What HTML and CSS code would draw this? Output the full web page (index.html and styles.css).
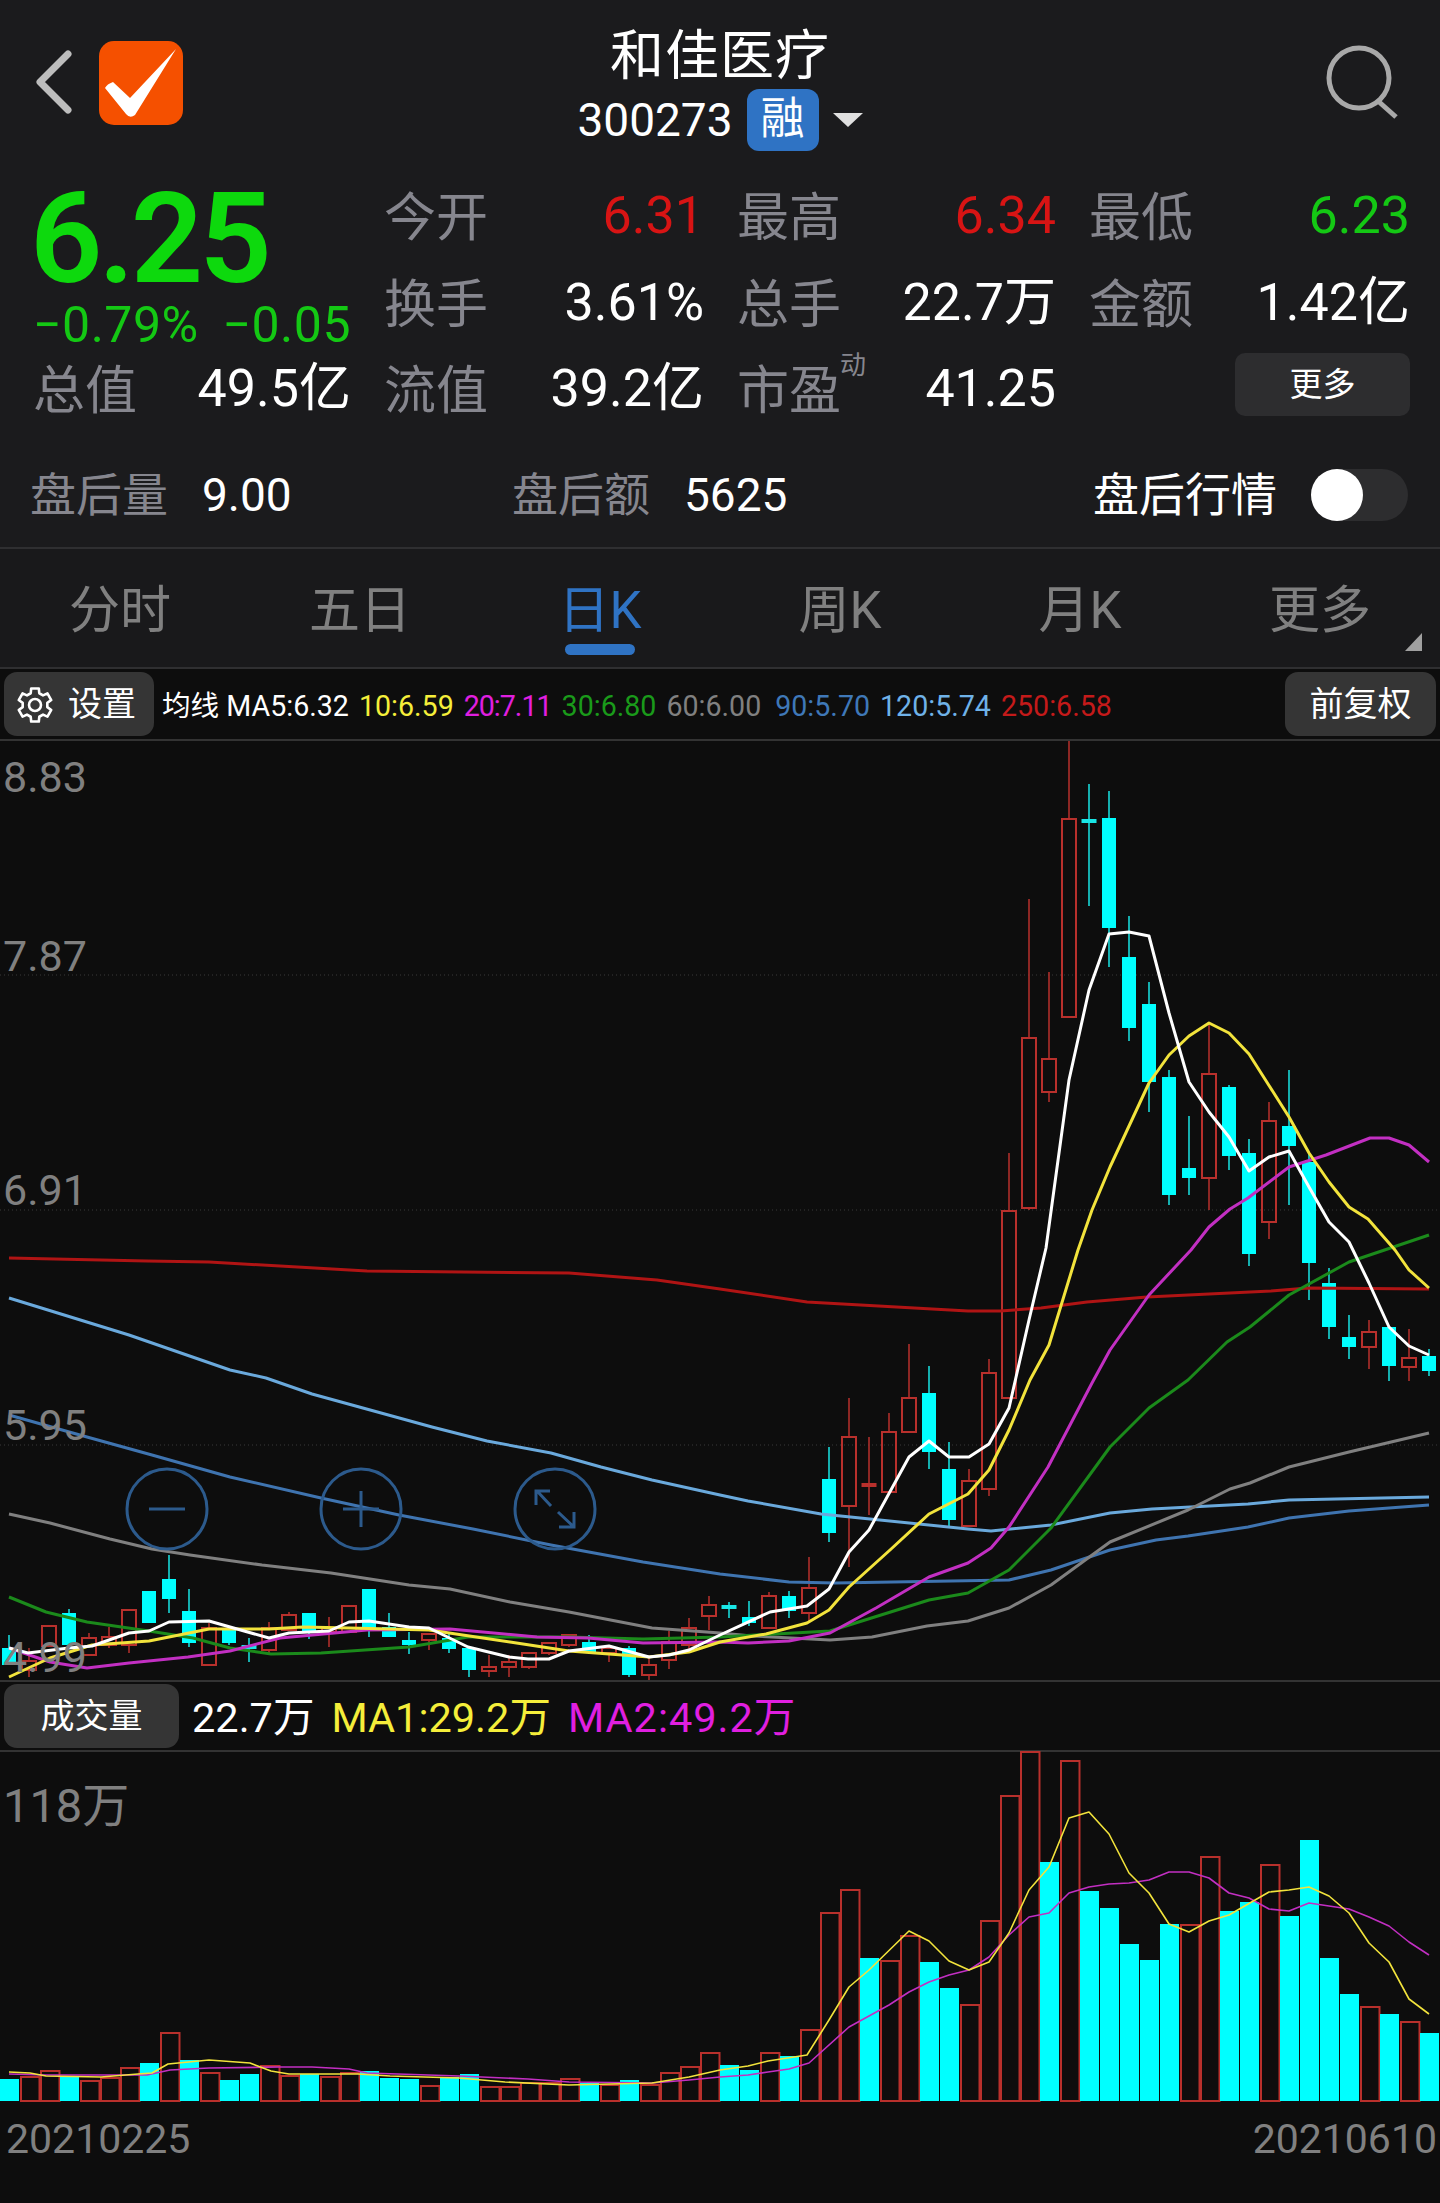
FILE: index.html
```html
<!doctype html>
<html lang="zh-CN">
<head>
  <meta charset="UTF-8" />
  <meta name="viewport" content="width=device-width, initial-scale=1.0" />
  <title>和佳医疗 300273</title>
  <link rel="stylesheet" href="styles.css">
</head>
<body>

  <header class="topbar">
    <div class="topbar_left">
      <svg class="back" viewBox="0 0 40 64"><path d="M36 4 L8 32 L36 60" /></svg>
      <svg class="watch" viewBox="0 0 84 84">
        <rect width="84" height="84" rx="15" />
        <path d="M6 47 Q8 43 14 41 L31 57 L77 8 L36 74 Q31 78 27 73 Z" />
      </svg>
    </div>
    <div class="topbar_mid">
      <div class="stock_name">和佳医疗</div>
      <div class="stock_code">
        <span>300273</span>
        <span class="rong">融</span>
        <i class="caret"></i>
      </div>
    </div>
    <svg class="search" viewBox="0 0 76 76">
      <circle cx="33" cy="33" r="30" />
      <path d="M52 56 L70 72" />
    </svg>
  </header>

  <section class="quote">
    <div class="price_box">
      <div class="price">6.25</div>
      <div class="change"><span>−0.79%</span><span>−0.05</span></div>
    </div>
    <div class="cell"><span class="label">今开</span><span class="red">6.31</span></div>
    <div class="cell"><span class="label">最高</span><span class="red">6.34</span></div>
    <div class="cell"><span class="label">最低</span><span class="green">6.23</span></div>
    <div class="cell"><span class="label">换手</span><span>3.61%</span></div>
    <div class="cell"><span class="label">总手</span><span>22.7万</span></div>
    <div class="cell"><span class="label">金额</span><span>1.42亿</span></div>
    <div class="cell"><span class="label">总值</span><span>49.5亿</span></div>
    <div class="cell"><span class="label">流值</span><span>39.2亿</span></div>
    <div class="cell"><span class="label pe">市盈<sup>动</sup></span><span>41.25</span></div>
    <div class="cell cell_more"><button class="more">更多</button></div>
  </section>

  <section class="after">
    <div class="after_item"><span class="label">盘后量</span><span>9.00</span></div>
    <div class="after_item"><span class="label">盘后额</span><span>5625</span></div>
    <div class="after_switch">
      <span>盘后行情</span>
      <span class="toggle"><i></i></span>
    </div>
  </section>

  <nav class="tabs">
    <a>分时</a>
    <a>五日</a>
    <a class="active">日K</a>
    <a>周K</a>
    <a>月K</a>
    <a class="tab_more">更多</a>
  </nav>

  <main class="board">
    <div class="ma_bar">
      <button class="chip chip_set">
        <svg class="gear" viewBox="0 0 36 36">
          <polygon points="13.72,6.25 14.18,1.44 21.82,1.44 22.28,6.25 26.04,8.41 30.43,6.41 34.25,13.03 30.32,15.83 30.32,20.17 34.25,22.97 30.43,29.59 26.04,27.59 22.28,29.75 21.82,34.56 14.18,34.56 13.72,29.75 9.96,27.59 5.57,29.59 1.75,22.97 5.68,20.17 5.68,15.83 1.75,13.03 5.57,6.41 9.96,8.41" />
          <circle cx="18" cy="18" r="6" />
        </svg>
        <span>设置</span>
      </button>
      <div class="ma_list">
        <span class="c_white">均线 MA5:6.32</span>
        <span class="c_yellow">10:6.59</span>
        <span class="c_magenta">20:7.11</span>
        <span class="c_green">30:6.80</span>
        <span class="c_gray">60:6.00</span>
        <span class="c_blue">90:5.70</span>
        <span class="c_sky">120:5.74</span>
        <span class="c_red">250:6.58</span>
      </div>
      <button class="chip chip_adj">前复权</button>
    </div>

    <svg id="kline" class="kline" viewBox="0 741 1440 939"></svg>

    <div class="vol_bar">
      <button class="chip chip_vol">成交量</button>
      <div class="vol_list">
        <span class="c_white">22.7万</span>
        <span class="c_yellow">MA1:29.2万</span>
        <span class="c_magenta vol_ma2">MA2:49.2万</span>
      </div>
    </div>

    <svg id="volume" class="volume" viewBox="0 1752 1440 353"></svg>

    <div class="dates">
      <span>20210225</span>
      <span>20210610</span>
    </div>
  </main>

  <script src="chart.js"></script>
</body>
</html>
```

FILE: styles.css
```css
* {
  box-sizing: border-box;
}

body {
  margin: 0;
  width: 1440px;
  height: 2203px;
  overflow: hidden;
  background: #1b1b1d;
  color: #fff;
  font-family: Roboto, "Noto Sans CJK SC", sans-serif;
}

button {
  border: 0;
  color: #fff;
  font-family: inherit;
}

/* top bar */
.topbar {
  height: 173px;
  display: grid;
  grid-template-columns: 1fr auto 1fr;
  padding-top: 30px;
}

.topbar_left {
  display: flex;
  align-items: flex-start;
  gap: 27px;
  padding: 11px 0 0 32px;
}

.back {
  width: 40px;
  height: 64px;
  margin-top: 9px;
}

.back path {
  fill: none;
  stroke: #bdbdbd;
  stroke-width: 7;
  stroke-linecap: round;
  stroke-linejoin: round;
}

.watch {
  width: 84px;
  height: 84px;
}

.watch rect {
  fill: #f55000;
}

.watch path {
  fill: #fff;
}

.topbar_mid {
  text-align: center;
}

.stock_name {
  font-size: 54px;
  line-height: 54px;
  letter-spacing: 1px;
}

.stock_code {
  display: flex;
  align-items: center;
  justify-content: center;
  gap: 14px;
  font-size: 46px;
  margin-top: 5px;
}

.rong {
  width: 72px;
  height: 62px;
  border-radius: 12px;
  background: #2f73c4;
  font-size: 44px;
  line-height: 60px;
  text-align: center;
}

.caret {
  width: 0;
  height: 0;
  border-left: 15px solid transparent;
  border-right: 15px solid transparent;
  border-top: 14px solid #e0e0e0;
}

.search {
  width: 76px;
  height: 76px;
  justify-self: end;
  margin: 15px 38px 0 0;
}

.search circle,
.search path {
  fill: none;
  stroke: #a9a9a9;
  stroke-width: 5;
}

/* quote grid */
.quote {
  display: grid;
  grid-template-columns: 318px 320px 319px 321px;
  grid-auto-rows: 86.5px;
  column-gap: 33px;
  padding-left: 33px;
  font-size: 52px;
}

.price_box {
  grid-row: span 2;
  display: flex;
  flex-direction: column;
}

.price {
  margin: 3px 0 0 -3px;
  font-size: 127px;
  font-weight: 600;
  line-height: 126px;
  color: #0dd90d;
  letter-spacing: -4px;
}

.change {
  display: flex;
  justify-content: space-between;
  font-size: 50px;
  line-height: 46px;
  letter-spacing: 0.5px;
  color: #14c814;
}

.cell {
  display: flex;
  align-items: center;
  justify-content: space-between;
  line-height: 60px;
}

.cell .label {
  padding-top: 6px;
}

.cell_more {
  justify-content: flex-end;
}

.label {
  color: #86868e;
}

.red {
  color: #d81414;
}

.green {
  color: #14c814;
}

.pe {
  position: relative;
}

.pe sup {
  position: absolute;
  left: 103px;
  top: -6px;
  font-size: 26px;
  line-height: 30px;
}

.more {
  width: 175px;
  height: 63px;
  margin-top: -10px;
  padding-bottom: 6px;
  border-radius: 10px;
  background: #2d2d2f;
  font-size: 33px;
}

/* after hours */
.after {
  height: 116.5px;
  display: grid;
  grid-template-columns: 482px 414px 1fr;
  align-items: center;
  padding: 10px 32px 0 30px;
  border-bottom: 2px solid #2f2f31;
  font-size: 46px;
  line-height: 60px;
}

.after_item {
  display: flex;
  gap: 34px;
}

.after_switch {
  display: flex;
  align-items: center;
  justify-content: flex-end;
  gap: 34px;
}

.toggle {
  display: block;
  width: 97px;
  height: 52px;
  border-radius: 26px;
  background: #2d2d2f;
}

.toggle i {
  display: block;
  width: 52px;
  height: 52px;
  border-radius: 50%;
  background: #fff;
}

/* period tabs */
.tabs {
  height: 120px;
  display: grid;
  grid-template-columns: repeat(6, 240px);
  border-bottom: 2px solid #2f2f31;
  background: #19191b;
  font-size: 51px;
  color: #808080;
}

.tabs a {
  position: relative;
  text-align: center;
  line-height: 124px;
}

.tabs .active {
  color: #2f73c4;
}

.tabs .active::after {
  content: "";
  position: absolute;
  left: 85px;
  top: 95px;
  width: 70px;
  height: 11px;
  border-radius: 6px;
  background: #2f73c4;
}

.tab_more::after {
  content: "";
  position: absolute;
  right: 18px;
  bottom: 22px;
  border-left: 17px solid transparent;
  border-bottom: 18px solid #a0a0a0;
}

/* chart board */
.board {
  background: #0d0d0d;
  height: 1535px;
}

.ma_bar {
  height: 72px;
  display: flex;
  align-items: center;
  justify-content: space-between;
  padding: 0 4px;
  border-bottom: 2px solid #333;
}

.chip {
  height: 64px;
  padding-bottom: 6px;
  border-radius: 13px;
  background: #353535;
  font-size: 34px;
}

.chip_set {
  width: 150px;
  display: flex;
  align-items: center;
  gap: 15px;
  padding-left: 13px;
}

.chip_adj {
  width: 151px;
}

.chip_vol {
  width: 175px;
}

.gear {
  width: 36px;
  height: 36px;
  margin-top: 6px;
}

.gear polygon,
.gear circle {
  fill: none;
  stroke: #fff;
  stroke-width: 2.6;
  stroke-linejoin: round;
}

.ma_list {
  flex: 1;
  display: flex;
  gap: 10px;
  padding: 4px 0 0 8px;
  font-size: 28.6px;
  line-height: 40px;
}

.ma_list .c_magenta {
  letter-spacing: -1px;
}

.ma_list .c_blue {
  margin-left: 4px;
}

.c_white { color: #fff; }
.c_yellow { color: #f5ee3a; }
.c_magenta { color: #e01fe0; }
.c_green { color: #1a9a1a; }
.c_gray { color: #808080; }
.c_blue { color: #3f78b8; }
.c_sky { color: #6fb2e8; }
.c_red { color: #c41a1a; }

.kline,
.volume {
  display: block;
  width: 1440px;
  overflow: visible;
}

.kline {
  height: 939px;
}

.volume {
  height: 353px;
}

.vol_bar {
  height: 72px;
  display: flex;
  align-items: center;
  padding: 0 4px;
  border-top: 2px solid #333;
  border-bottom: 2px solid #333;
}

.vol_list {
  display: flex;
  gap: 17px;
  padding: 4px 0 0 13px;
  font-size: 41.5px;
  line-height: 50px;
}

.vol_ma2 {
  letter-spacing: 1px;
}

.dates {
  display: flex;
  justify-content: space-between;
  padding: 10px 3px 0 6px;
  font-size: 41px;
  color: #808080;
}

/* svg chart parts */
.grid_line {
  stroke: #3a3a3a;
  stroke-width: 1;
  stroke-dasharray: 1 3;
}

.axis_text {
  fill: #808080;
  font-size: 43px;
}

.axis_big {
  font-size: 47px;
}

.wick_c { stroke: #19e6e6; stroke-width: 1.5; }
.wick_r { stroke: #b8302c; stroke-width: 1.5; }
.body_c { fill: #00ffff; }
.body_r { fill: none; stroke: #b8302c; stroke-width: 2; }
.doji_r { stroke: #b8302c; stroke-width: 4; }
.doji_c { stroke: #19e6e6; stroke-width: 4; }

.ma {
  fill: none;
  stroke-width: 3;
  stroke-linejoin: round;
}

.ma_thin {
  stroke-width: 1.6;
}

.ma5 { stroke: #fff; }
.ma10 { stroke: #f2e33c; }
.ma20 { stroke: #c22fc2; }
.ma30 { stroke: #1b8a1b; }
.ma60 { stroke: #808080; }
.ma90 { stroke: #3f74b0; }
.ma120 { stroke: #6aa9dc; }
.ma250 { stroke: #b01414; }

.zoom_btn circle,
.zoom_btn path {
  fill: none;
  stroke: #2c5a8c;
  stroke-width: 3;
}
```

FILE: chart.js
```js
// candles: [colour, wick top, body top, body bottom, wick bottom], all in page px
const candles = [
  ["c",1635,1648,1665,1665],["r",1648,1661,1670,1677],["r",1626,1626,1646,1646],["c",1609,1613,1645,1648],
  ["r",1633,1638,1655,1655],["r",1627,1637,1645,1648],["r",1610,1610,1645,1653],["c",1591,1591,1623,1623],
  ["c",1555,1579,1599,1613],["c",1589,1611,1643,1647],["r",1623,1628,1665,1665],["c",1628,1628,1643,1645],
  ["c",1638,1647,1647,1662],["r",1622,1628,1650,1653],["r",1612,1615,1630,1630],["c",1613,1613,1631,1639],
  ["r",1617,1628,1632,1647],["r",1606,1606,1632,1633],["c",1589,1589,1628,1637],["c",1613,1627,1637,1637],
  ["c",1632,1640,1645,1654],["r",1634,1634,1640,1650],["c",1632,1638,1649,1653],["c",1648,1648,1670,1677],
  ["r",1655,1667,1671,1677],["r",1655,1662,1667,1677],["r",1653,1653,1667,1669],["r",1643,1643,1653,1655],
  ["r",1635,1635,1645,1647],["c",1635,1642,1653,1653],["r",1645,1648,1653,1662],["c",1646,1648,1675,1677],
  ["r",1657,1665,1675,1680],["r",1631,1642,1660,1669],["r",1618,1628,1645,1653],["r",1596,1605,1616,1630],
  ["c",1602,1607,1607,1618],["c",1601,1617,1623,1626],["r",1592,1596,1628,1628],["c",1591,1596,1611,1618],
  ["r",1557,1588,1613,1621],["c",1447,1479,1533,1542],["r",1398,1437,1506,1567],["r",1437,1485,1485,1515],
  ["r",1413,1432,1492,1492],["r",1344,1398,1432,1432],["c",1366,1393,1452,1469],["c",1442,1469,1520,1526],
  ["r",1469,1481,1526,1527],["r",1359,1373,1489,1496],["r",1153,1211,1398,1398],["r",899,1038,1208,1210],
  ["r",972,1059,1092,1102],["r",741,819,1017,1017],["c",784,821,821,906],["c",791,818,928,967],
  ["c",916,957,1028,1041],["c",982,1004,1082,1112],["c",1070,1077,1195,1205],["c",1116,1168,1178,1195],
  ["r",1023,1074,1178,1210],["c",1085,1087,1156,1170],["c",1139,1153,1254,1266],["r",1102,1121,1222,1239],
  ["c",1070,1126,1146,1205],["c",1153,1162,1263,1300],["c",1268,1283,1327,1339],["c",1315,1337,1347,1359],
  ["r",1320,1332,1347,1369],["c",1327,1327,1366,1381],["r",1329,1358,1367,1381],["c",1349,1356,1371,1376]
];

const priceLines = {
  ma250: "9,1258 147,1261 209,1262 367,1271 569,1273 657,1280 720,1289 807,1302 968,1311 1000,1311 1041,1308 1087,1302 1147,1297 1271,1291 1308,1288 1429,1289",
  ma120: "9,1298 129,1335 230,1370 266,1378 312,1394 432,1427 487,1441 551,1453 601,1467 652,1480 720,1495 748,1501 821,1514 968,1529 991,1531 1051,1525 1110,1513 1152,1509 1248,1504 1289,1500 1429,1497",
  ma90: "9,1415 87,1437 152,1455 230,1477 321,1498 399,1515 473,1529 551,1545 643,1562 720,1574 789,1582 835,1583 1009,1580 1051,1570 1110,1550 1156,1540 1188,1536 1248,1527 1289,1518 1349,1511 1429,1505",
  ma60: "9,1514 50,1523 110,1539 152,1549 190,1555 262,1565 331,1573 409,1585 450,1589 510,1602 569,1612 652,1628 720,1633 752,1636 830,1640 872,1637 927,1626 968,1621 1009,1608 1051,1585 1110,1542 1188,1510 1230,1489 1250,1483 1289,1467 1349,1452 1429,1433",
  ma30: "9,1597 46,1612 87,1622 149,1631 193,1638 230,1648 271,1654 321,1653 409,1647 468,1637 569,1637 643,1639 720,1637 830,1631 881,1615 929,1600 968,1593 1009,1570 1051,1528 1110,1447 1149,1408 1188,1380 1227,1342 1250,1327 1289,1295 1349,1262 1429,1235",
  ma20: "9,1648 50,1662 87,1668 129,1663 188,1657 230,1651 280,1638 367,1630 450,1629 537,1637 588,1638 643,1643 720,1642 748,1643 789,1641 830,1633 876,1608 929,1577 968,1563 991,1548 1009,1527 1048,1467 1092,1383 1110,1350 1149,1295 1191,1250 1209,1227 1230,1209 1248,1198 1289,1167 1326,1155 1370,1138 1389,1138 1409,1145 1429,1162",
  ma10: "9,1677 50,1658 92,1645 149,1641 209,1629 269,1629 303,1627 349,1628 429,1630 510,1642 569,1651 649,1657 689,1652 720,1642 766,1634 807,1623 829,1610 849,1587 890,1550 929,1514 968,1494 989,1470 1009,1430 1030,1380 1049,1345 1078,1250 1092,1210 1110,1167 1149,1083 1169,1055 1189,1036 1209,1023 1229,1033 1249,1054 1289,1117 1309,1153 1329,1182 1349,1207 1368,1219 1395,1250 1409,1270 1429,1288",
  ma5: "9,1648 28,1653 69,1648 92,1646 129,1633 149,1631 169,1622 209,1621 269,1638 289,1633 329,1631 349,1622 369,1621 409,1627 429,1628 468,1647 509,1657 528,1659 549,1659 569,1651 609,1646 649,1657 669,1655 689,1650 720,1635 770,1612 807,1606 829,1589 849,1552 869,1530 909,1457 929,1441 949,1457 969,1457 989,1444 1009,1408 1029,1320 1046,1248 1069,1080 1089,990 1109,934 1129,932 1149,936 1169,1013 1189,1082 1209,1112 1229,1137 1249,1171 1269,1157 1289,1151 1309,1187 1329,1222 1349,1242 1369,1283 1389,1327 1409,1346 1429,1355"
};

// volume bar tops, same order as candles
const volTops = [
  2079,2077,2071,2077,2081,2078,2068,2063,2033,2060,2073,2080,2074,2066,2076,2074,2077,2073,
  2071,2078,2079,2086,2077,2074,2087,2087,2083,2083,2079,2083,2085,2080,2085,2073,2067,2053,
  2065,2070,2053,2056,2030,1913,1890,1958,1961,1936,1962,1988,2005,1921,1796,1752,1862,1761,
  1891,1908,1944,1960,1924,1925,1857,1911,1902,1865,1916,1840,1958,1994,2007,2014,2022,2033
];
const volUp = "crrcrrrcrcrccrrcrrcccrccrrrrrcrcrrrrccrcrrrcrrccrrrrcrcccccrrccrccccrcrc".split("");

const volLines = {
  ma2: "9,2074 46,2075 147,2075 170,2070 209,2068 280,2067 312,2067 349,2069 367,2073 459,2076 528,2079 569,2082 652,2083 689,2080 720,2077 748,2075 768,2072 789,2069 809,2063 849,2027 889,2005 909,1992 929,1982 949,1975 969,1970 989,1957 1009,1935 1029,1917 1049,1913 1069,1893 1089,1887 1109,1884 1129,1883 1149,1880 1169,1872 1189,1872 1209,1878 1229,1893 1249,1898 1269,1909 1289,1911 1309,1903 1329,1906 1349,1909 1369,1917 1389,1926 1409,1942 1429,1955",
  ma1: "9,2072 30,2073 46,2076 101,2077 138,2074 152,2073 168,2064 209,2060 250,2063 271,2071 289,2074 358,2074 390,2076 459,2078 505,2082 569,2085 652,2083 689,2077 720,2070 748,2066 768,2061 807,2055 829,2020 849,1987 869,1970 909,1931 929,1941 949,1961 969,1970 989,1962 1009,1933 1029,1890 1049,1867 1069,1818 1089,1812 1109,1834 1129,1873 1149,1893 1169,1924 1189,1932 1209,1921 1229,1915 1269,1892 1289,1890 1309,1887 1329,1896 1349,1913 1369,1943 1389,1962 1409,1999 1429,2014"
};

function drawCandles() {
  let out = "";

  // price grid
  [975, 1210, 1445].forEach(function (y) {
    out += `<line class="grid_line" x1="0" x2="1440" y1="${y}" y2="${y}" />`;
  });

  candles.forEach(function (c, i) {
    const x = 9 + i * 20;
    const [col, top, bodyTop, bodyBottom, bottom] = c;
    out += `<line class="wick_${col}" x1="${x}" x2="${x}" y1="${top}" y2="${bodyTop}" />`;
    out += `<line class="wick_${col}" x1="${x}" x2="${x}" y1="${bodyBottom}" y2="${bottom}" />`;
    if (bodyTop == bodyBottom) {
      out += `<line class="doji_${col}" x1="${x - 7.5}" x2="${x + 7.5}" y1="${bodyTop}" y2="${bodyTop}" />`;
    } else {
      out += `<rect class="body_${col}" x="${x - 7}" y="${bodyTop}" width="14" height="${bodyBottom - bodyTop}" />`;
    }
  });

  Object.keys(priceLines).forEach(function (name) {
    out += `<polyline class="ma ${name}" points="${priceLines[name]}" />`;
  });

  // axis labels sit on top of the lines
  out += `<text class="axis_text" x="3" y="792">8.83</text>`;
  out += `<text class="axis_text" x="3" y="971">7.87</text>`;
  out += `<text class="axis_text" x="3" y="1205">6.91</text>`;
  out += `<text class="axis_text" x="3" y="1440">5.95</text>`;
  out += `<text class="axis_text" x="3" y="1672">4.99</text>`;

  // zoom buttons over the chart
  out += `<g class="zoom_btn"><circle cx="167" cy="1509" r="40" /><path d="M149 1509 H185" /></g>`;
  out += `<g class="zoom_btn"><circle cx="361" cy="1509" r="40" /><path d="M343 1509 H379 M361 1491 V1527" /></g>`;
  out += `<g class="zoom_btn"><circle cx="555" cy="1509" r="40" /><path d="M537 1491 L551 1506 M536 1505 V1491 H550 M558 1512 L574 1527 M559 1527 H574 V1512" /></g>`;

  document.getElementById("kline").innerHTML = out;
}

function drawVolume() {
  let out = "";
  const base = 2101;

  volTops.forEach(function (top, i) {
    const x = i * 20;
    if (volUp[i] == "c") {
      out += `<rect class="body_c" x="${x}" y="${top}" width="19" height="${base - top}" />`;
    } else {
      out += `<rect class="body_r" x="${x + 1}" y="${top}" width="18.5" height="${base - top}" />`;
    }
  });

  out += `<polyline class="ma ma_thin ma20" points="${volLines.ma2}" />`;
  out += `<polyline class="ma ma_thin ma10" points="${volLines.ma1}" />`;
  out += `<text class="axis_text axis_big" x="3" y="1822">118万</text>`;

  document.getElementById("volume").innerHTML = out;
}

drawCandles();
drawVolume();
```
